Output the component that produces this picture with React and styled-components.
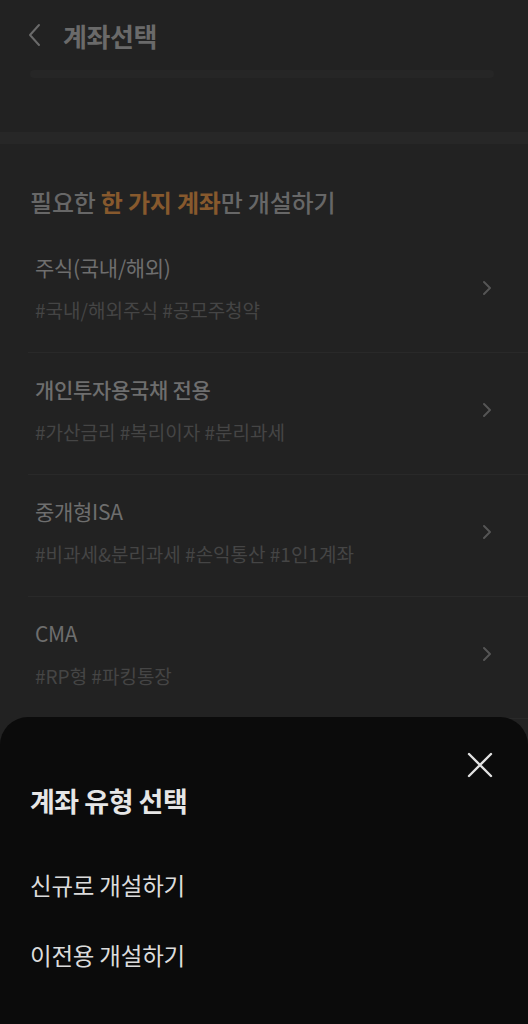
import React from 'react';
import styled, { createGlobalStyle } from 'styled-components';

const GlobalStyle = createGlobalStyle`
    html, body {
        margin: 0;
        padding: 0;
        background: #222222;
    }
    body {
        font-family: "Noto Sans CJK KR", "Noto Sans", sans-serif;
    }
`;

const Screen = styled.div`
    position: relative;
    width: 528px;
    height: 1024px;
    overflow: hidden;
    background: #222222;
`;

const Header = styled.header`
    display: flex;
    align-items: center;
    gap: 19px;
    height: 70px;
    padding-left: 26px;
    box-sizing: border-box;
`;

const HeaderTitle = styled.h1`
    margin: 0;
    font-size: 26px;
    font-weight: 700;
    color: #6a6a6a;
    letter-spacing: -0.4px;
`;

const ProgressBar = styled.div`
    height: 8px;
    margin: 0 34px 0 30px;
    background: #262626;
    border-radius: 4px;
`;

const SectionGap = styled.div`
    height: 12px;
    margin-top: 54px;
    background: #272727;
`;

const Section = styled.section`
    padding-top: 44px;
`;

const SectionTitle = styled.h2`
    margin: 0 0 0 30px;
    font-size: 24px;
    line-height: 28px;
    font-weight: 500;
    color: #676767;
    letter-spacing: -0.2px;
`;

const Highlight = styled.span`
    color: #87592d;
    font-weight: 700;
`;

const List = styled.ul`
    list-style: none;
    margin: 15px 0 0 28px;
    padding: 0;
`;

const Item = styled.li`
    display: flex;
    align-items: center;
    justify-content: space-between;
    height: 122px;
    box-sizing: border-box;
    padding: 0 36px 8px 7px;
    border-bottom: 1px solid #292929;
`;

const ItemText = styled.div`
    display: flex;
    flex-direction: column;
    gap: 18px;
`;

const ItemTitle = styled.div`
    font-size: 21px;
    line-height: 26px;
    font-weight: ${(p) => (p.strong ? 500 : 400)};
    color: #6e6e6e;
    letter-spacing: -0.3px;
`;

const Tags = styled.div`
    font-size: 19px;
    line-height: 24px;
    color: #454545;
    letter-spacing: 0;
`;

const Sheet = styled.div`
    position: absolute;
    left: 0;
    right: 0;
    bottom: 0;
    height: 307px;
    background: #0b0b0b;
    border-radius: 28px 28px 0 0;
    padding: 34px 34px 0 30px;
    box-sizing: border-box;
`;

const SheetHead = styled.div`
    display: flex;
    justify-content: flex-end;
`;

const SheetTitle = styled.h3`
    margin: 6px 0 0;
    font-size: 27px;
    line-height: 32px;
    font-weight: 700;
    color: #e6e6e6;
    letter-spacing: -0.5px;
`;

const Options = styled.div`
    display: flex;
    flex-direction: column;
    gap: 40px;
    margin-top: 53px;
`;

const Option = styled.button`
    all: unset;
    font-family: "Noto Sans CJK KR", sans-serif;
    font-size: 23.5px;
    line-height: 30px;
    color: #dcdcdc;
    letter-spacing: -0.2px;
    cursor: pointer;
`;

const IconButton = styled.button`
    all: unset;
    display: flex;
    cursor: pointer;
`;

const BackIcon = () => (
    <svg width="18" height="26" viewBox="0 0 18 26" fill="none">
        <path d="M13 3 L4 13 L13 23" stroke="#6a6a6a" strokeWidth="2" strokeLinecap="round" strokeLinejoin="round" />
    </svg>
);

const Chevron = () => (
    <svg width="10" height="16" viewBox="0 0 10 16" fill="none">
        <path d="M2 2 L8 8 L2 14" stroke="#555" strokeWidth="2" strokeLinecap="round" strokeLinejoin="round" />
    </svg>
);

const CloseIcon = () => (
    <svg width="28" height="28" viewBox="0 0 28 28" fill="none">
        <path d="M3 3 L25 25 M25 3 L3 25" stroke="#e2e2e2" strokeWidth="2.4" strokeLinecap="round" />
    </svg>
);

const accounts = [
    { title: '주식(국내/해외)', tags: '#국내/해외주식 #공모주청약' },
    { title: '개인투자용국채 전용', tags: '#가산금리 #복리이자 #분리과세', strong: true },
    { title: '중개형ISA', tags: '#비과세&분리과세 #손익통산 #1인1계좌' },
    { title: 'CMA', tags: '#RP형 #파킹통장' },
];

const App = () => {
    return (
        <Screen>
            <GlobalStyle />
            <Header>
                <IconButton><BackIcon /></IconButton>
                <HeaderTitle>계좌선택</HeaderTitle>
            </Header>
            <ProgressBar />
            <SectionGap />
            <Section>
                <SectionTitle>
                    필요한 <Highlight>한 가지 계좌</Highlight>만 개설하기
                </SectionTitle>
                <List>
                    {accounts.map((a) => (
                        <Item key={a.title}>
                            <ItemText>
                                <ItemTitle strong={a.strong}>{a.title}</ItemTitle>
                                <Tags>{a.tags}</Tags>
                            </ItemText>
                            <Chevron />
                        </Item>
                    ))}
                </List>
            </Section>
            <Sheet>
                <SheetHead>
                    <IconButton><CloseIcon /></IconButton>
                </SheetHead>
                <SheetTitle>계좌 유형 선택</SheetTitle>
                <Options>
                    <Option>신규로 개설하기</Option>
                    <Option>이전용 개설하기</Option>
                </Options>
            </Sheet>
        </Screen>
    );
};

export default App;
